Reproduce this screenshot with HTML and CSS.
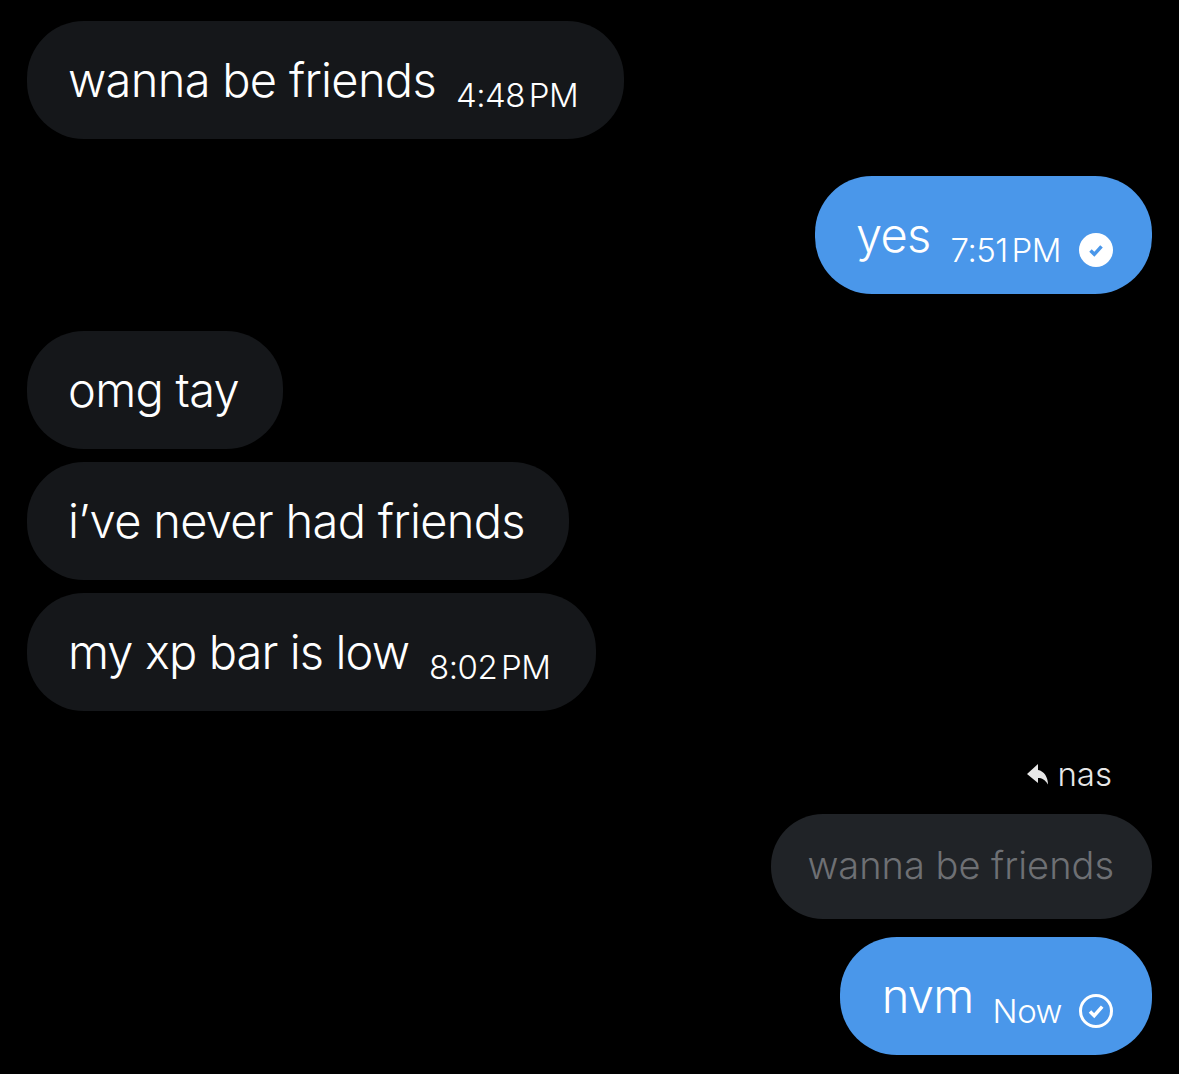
FILE: index.html
```html
<!DOCTYPE html>
<html lang="en">
<head>
<meta charset="utf-8">
<title>Messages</title>
<link rel="stylesheet" href="styles.css">
</head>
<body>
<main class="chat">
  <div class="bubble in first"><span class="text">wanna be friends</span><span class="time">4:48 PM</span></div>
  <div class="bubble out gap"><span class="text">yes</span><span class="time">7:51 PM</span>
    <svg class="check" viewBox="0 0 34 34"><circle cx="17" cy="17" r="17" fill="#fff"/><path d="M11.500 17.500l3.800 3.800 7.200-8" fill="none" stroke="#4a97ea" stroke-width="3.500"/></svg></div>
  <div class="bubble in plain gap"><span class="text">omg tay</span></div>
  <div class="bubble in plain near"><span class="text">i’ve never had friends</span></div>
  <div class="bubble in near"><span class="text tight">my xp bar is low</span><span class="time">8:02 PM</span></div>
  <div class="reply-label">
    <svg class="reply-icon" viewBox="0 0 22 22"><path d="M11 1L0 11l11 9v-5c4 0 7 1.500 10 6.500C21 14 17 8 11 7z" fill="#e7e7e7"/></svg>
    <span>nas</span>
  </div>
  <div class="quoted"><span>wanna be friends</span></div>
  <div class="bubble out last"><span class="text">nvm</span><span class="time">Now</span>
    <svg class="check" viewBox="0 0 34 34"><circle cx="17" cy="17" r="15.500" fill="none" stroke="#fff" stroke-width="3"/><path d="M11 17.500l4.200 4.200 8-9" fill="none" stroke="#fff" stroke-width="3.500"/></svg></div>
</main>
</body>
</html>
```
FILE: styles.css
```css
* { box-sizing: border-box; }
html, body { margin: 0; background: #000; }
body { width: 1179px; height: 1074px; overflow: hidden; font-family: "Inter", "Liberation Sans", sans-serif; font-weight: 350; color: #fff; }
.chat { display: flex; flex-direction: column; align-items: flex-start; padding: 21px 27px 0; }
.bubble { display: flex; align-items: flex-start; height: 118px; border-radius: 57px; padding: 0 46px 0 41px; white-space: nowrap; }
.in { background: #15171a; }
.plain { padding-right: 44px; }
.out { background: #4a97ea; align-self: flex-end; padding: 0 39px 0 41px; }
.gap { margin-top: 37px; }
.near { margin-top: 13px; }
.text { font-size: 47px; line-height: 117px; letter-spacing: -0.7px; }
.tight { letter-spacing: -0.9px; }
.time { font-size: 33px; line-height: 38px; margin: 55px 0 0 20px; letter-spacing: -0.5px; word-spacing: -5px; }
.check { width: 34px; height: 34px; margin: 57px 0 0 18px; flex: none; }
.reply-label { align-self: flex-end; display: flex; align-items: center; gap: 8px; margin: 43px 40px 0 0; height: 40px; font-size: 33px; color: #e7e7e7; }
.reply-icon { width: 22px; height: 22px; }
.quoted { align-self: flex-end; display: flex; align-items: center; height: 105px; margin-top: 20px; padding: 0 38px 3px 36px; border-radius: 52px; background: #202327; color: #6e7074; font-size: 38px; }
.last { margin-top: 18px; padding-left: 42px; }
.last .time { margin-left: 19px; }
.last .check { margin-left: 17px; }
```
